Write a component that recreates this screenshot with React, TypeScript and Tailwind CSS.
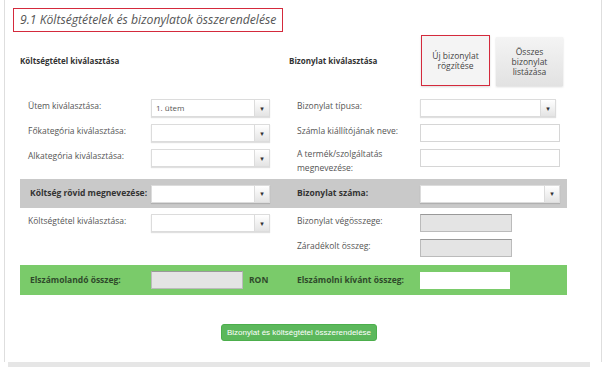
import React from "react";

const font = { fontFamily: '"Open Sans", "DejaVu Sans", sans-serif' };

function Select({ w, value }: { w: string; value?: string }) {
  return (
    <div className={`flex h-[18px] ${w} shadow-[0_1px_1px_rgba(0,0,0,0.12)]`}>
      <div className="flex-1 border border-[#dcdcdc] bg-white text-[8px] text-[#555] flex items-center pl-[4px]">
        {value}
      </div>
      <div className="w-[15px] border border-l-0 border-[#dcdcdc] bg-gradient-to-b from-white to-[#e4e4e4] flex items-center justify-center text-[7px] text-[#333] leading-none">
        ▾
      </div>
    </div>
  );
}

function Input({ w, gray }: { w: string; gray?: boolean }) {
  return (
    <div
      className={`h-[18px] ${w} border ${
        gray ? "bg-[#e4e4e4] border-[#bbb] border-t-[#999]" : "bg-white border-[#d6d6d6]"
      }`}
    />
  );
}

export default function App() {
  return (
    <div className="w-[604px] h-[370px] bg-white overflow-hidden relative" style={font}>
      <div className="ml-[4px] w-[598px] h-[362px] border-l border-r border-[#dedede] pl-[8px] pt-[6px]">
        <div className="inline-flex items-center h-[24px] border border-[#d42a3c] px-[6px]">
          <span className="italic text-[12.2px] text-[#555]">9.1 Költségtételek és bizonylatok összerendelése</span>
        </div>

        <div className="ml-[7px] w-[547px]">
          {/* header row */}
          <div className="flex items-center h-[51px] mt-[3px]">
            <div className="w-[269px] text-[8px] font-bold text-[#333]">Költségtétel kiválasztása</div>
            <div className="w-[132px] text-[8px] font-bold text-[#333]">Bizonylat kiválasztása</div>
            <div className="w-[69px] h-[51px] border border-[#d42a3c] bg-[#f4f4f4] flex items-center justify-center text-center text-[8.5px] leading-[10px] text-[#444] shadow-[0_1px_2px_rgba(0,0,0,0.15)]">
              Új bizonylat
              <br />
              rögzítése
            </div>
            <div className="ml-[6px] w-[67px] h-[49px] mt-[2px] bg-gradient-to-b from-[#f4f4f4] to-[#e2e2e2] flex items-center justify-center text-center text-[8.5px] leading-[10px] text-[#444] shadow-[0_1px_2px_rgba(0,0,0,0.15)]">
              Összes
              <br />
              bizonylat
              <br />
              listázása
            </div>
          </div>

          <div className="mt-[13px] flex flex-col gap-[7px] text-[8.5px] text-[#555]">
            <div className="flex items-start h-[18px]">
              <div className="pl-[8px] w-[131px] pt-[1px]">Ütem kiválasztása:</div>
              <Select w="w-[119px]" value="1. ütem" />
              <div className="ml-[27px] w-[123px] pt-[1px]">Bizonylat típusa:</div>
              <Select w="w-[136px]" />
            </div>
            <div className="flex items-start h-[18px]">
              <div className="pl-[8px] w-[131px] pt-[1px]">Főkategória kiválasztása:</div>
              <Select w="w-[119px]" />
              <div className="ml-[27px] w-[123px] pt-[1px]">Számla kiállítójának neve:</div>
              <Input w="w-[140px]" />
            </div>
            <div className="flex items-start h-[18px]">
              <div className="pl-[8px] w-[131px] pt-[1px]">Alkategória kiválasztása:</div>
              <Select w="w-[119px]" />
              <div className="ml-[27px] w-[123px] leading-[14px] -mt-[2px]">
                A termék/szolgáltatás
                <br />
                megnevezése:
              </div>
              <Input w="w-[140px]" />
            </div>
          </div>

          {/* gray band */}
          <div className="mt-[12px] h-[29px] bg-[#c9c9c9] flex items-center text-[8.5px] font-bold text-[#333]">
            <div className="pl-[10px] w-[131px]">Költség rövid megnevezése:</div>
            <Select w="w-[119px]" />
            <div className="ml-[27px] w-[123px]">Bizonylat száma:</div>
            <Select w="w-[140px]" />
          </div>

          <div className="mt-[6px] flex flex-col gap-[7px] text-[8.5px] text-[#555]">
            <div className="flex items-start h-[18px]">
              <div className="pl-[8px] w-[131px] pt-[1px]">Költségtétel kiválasztása:</div>
              <Select w="w-[119px]" />
              <div className="ml-[27px] w-[123px] pt-[1px]">Bizonylat végösszege:</div>
              <Input w="w-[92px]" gray />
            </div>
            <div className="flex items-start h-[18px]">
              <div className="w-[277px]" />
              <div className="w-[123px] pt-[1px]">Záradékolt összeg:</div>
              <Input w="w-[92px]" gray />
            </div>
          </div>

          {/* green band */}
          <div className="mt-[8px] h-[30px] bg-[#7acb6a] flex items-center text-[8.5px] font-bold text-[#2f4a2a]">
            <div className="pl-[10px] w-[131px]">Elszámolandó összeg:</div>
            <Input w="w-[92px]" gray />
            <div className="ml-[6px] w-[48px]">RON</div>
            <div className="w-[123px]">Elszámolni kívánt összeg:</div>
            <div className="h-[17px] w-[90px] bg-white" />
          </div>

          <div className="mt-[29px] flex pl-[201px]">
            <div
              className="h-[17px] w-[156px] justify-center rounded-[3px] bg-[#5cb85c] border border-[#4cae4c] text-white text-[8px] flex items-center"
              style={{ fontFamily: '"Liberation Sans Narrow", "Liberation Sans", sans-serif' }}
            >
              Bizonylat és költségtétel összerendelése
            </div>
          </div>
        </div>
      </div>
      <div className="ml-[8px] w-[582px] h-[5px] bg-[#e6e6e6]" />
    </div>
  );
}
